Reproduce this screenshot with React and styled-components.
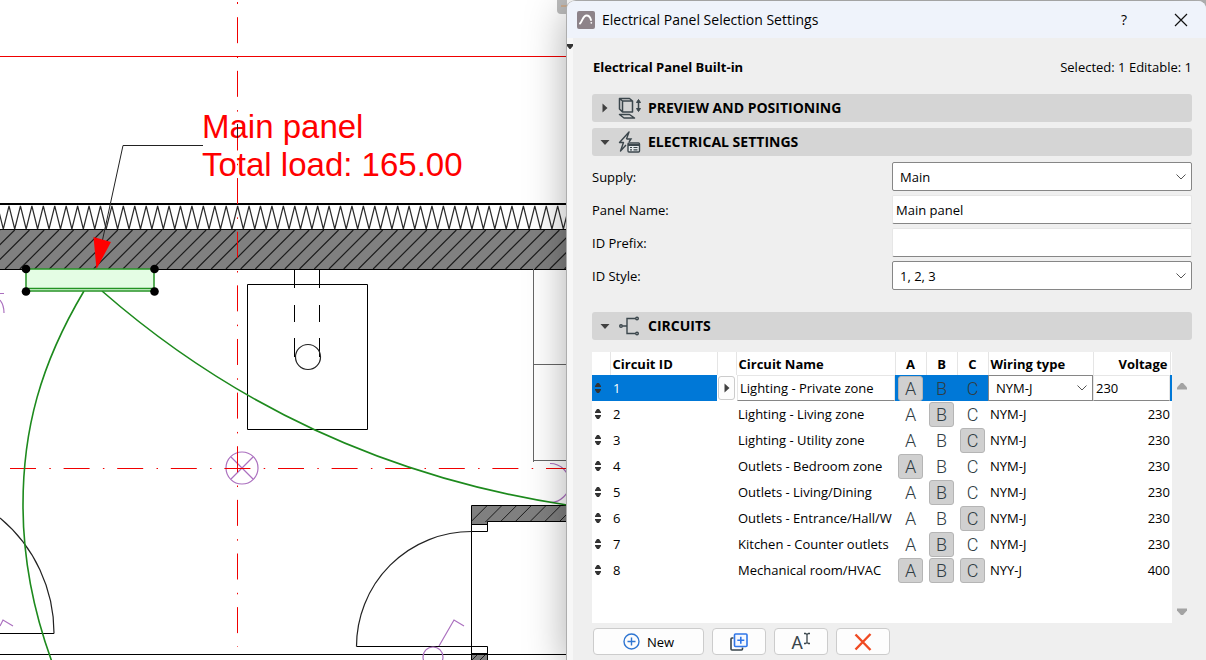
import React, { useState } from "react";
import styled, { createGlobalStyle } from "styled-components";

const GlobalStyle = createGlobalStyle`
  * {
    box-sizing: border-box;
  }

  body {
    margin: 0;
    background: #fff;
    color: #000;
    font-family: "Open Sans", "Noto Sans", sans-serif;
    font-size: 13px;
  }

  button,
  input,
  select {
    margin: 0;
    color: inherit;
    font: inherit;
  }
`;

// Page: floor plan on the left, settings dialog on the right
const Desktop = styled.div`
  display: grid;
  grid-template-columns: minmax(0, 567fr) minmax(0, 639fr);
  min-height: 100vh;
  overflow: hidden;
`;

const PlanArea = styled.main`
  display: flex;
  min-width: 0;
`;

const PlanDrawing = styled.svg`
  display: block;
  width: 100%;
  min-height: 100%;
  font-family: "Liberation Sans", Arial, sans-serif;
`;

const DialogSlot = styled.div`
  display: flex;
  padding-top: 1px;
  background: #b8b8b8;
  border-top-left-radius: 9px;
`;

const Dialog = styled.section`
  display: flex;
  flex-direction: column;
  flex: 1;
  min-width: 0;
  background: #efefef;
  border-radius: 8px 8px 0 0;
  box-shadow: -1px 0 0 #adadad, 0 8px 42px rgba(0, 0, 0, 0.34);
`;

const TitleBar = styled.header`
  display: flex;
  align-items: center;
  gap: 7px;
  height: 37px;
  padding-left: 10px;
  background: #eff3fb;
  border-radius: 8px 8px 0 0;
`;

const Title = styled.h1`
  flex: 1;
  margin: 0;
  font-size: 14px;
  font-weight: 400;
`;

const TitleButton = styled.button`
  display: grid;
  place-items: center;
  width: 50px;
  height: 37px;
  padding: 0;
  background: none;
  border: 0;
  font-size: 14px;
`;

const DialogMain = styled.div`
  display: flex;
  flex: 1;
  min-height: 0;
`;

const SideStrip = styled.div`
  width: 6px;
  padding-top: 6px;
  background: #f7f7f7;

  svg {
    display: block;
  }
`;

const DialogBody = styled.div`
  display: flex;
  flex: 1;
  flex-direction: column;
  min-width: 0;
  padding: 20px 14px 5px 19px;
`;

const Summary = styled.div`
  display: flex;
  align-items: center;
  justify-content: space-between;
  height: 18px;
  margin-bottom: 18px;
  padding-left: 1px;
`;

const PanelType = styled.h2`
  margin: 0;
  font-size: 13px;
  font-weight: 700;
`;

const SectionHeader = styled.button`
  display: flex;
  align-items: center;
  flex-shrink: 0;
  width: 100%;
  height: 28px;
  margin-bottom: ${(props) => props.$after || 6}px;
  padding: 0 0 1px 7px;
  background: #d5d5d5;
  border: 0;
  border-radius: 3px;
  font-size: 14px;
  font-weight: 700;
  line-height: 18px;
  text-align: left;

  svg {
    margin-right: 7px;
  }

  svg + svg {
    margin-right: 6px;
  }
`;

const Fields = styled.div`
  display: grid;
  gap: 4px;
  margin-bottom: 22px;
`;

const Field = styled.label`
  display: grid;
  grid-template-columns: 1fr 1fr;
  align-items: center;
`;

const TextInput = styled.input`
  width: 100%;
  height: 29px;
  padding: 0 3px;
  background: #fff;
  border: 1px solid #e6e6e6;
  border-bottom-color: #868686;
  border-radius: 2px;
  outline: 0;
`;

const SelectBox = styled.span`
  display: grid;
  grid-template-columns: minmax(0, 1fr);
  align-items: center;
  height: ${(props) => (props.$compact ? 26 : 29)}px;
  background: #fff;
  border: 1px solid #868686;
  border-radius: ${(props) => (props.$compact ? 0 : 2)}px;

  select,
  svg {
    grid-area: 1 / 1;
  }

  select {
    width: 100%;
    height: 100%;
    padding: 0 24px 0 7px;
    appearance: none;
    background: none;
    border: 0;
    outline: 0;
  }

  svg {
    justify-self: end;
    margin: 0 4px 0 0;
    pointer-events: none;
  }
`;

const CircuitArea = styled.div`
  display: flex;
  flex: 1;
  margin-bottom: 5px;
`;

const TableFrame = styled.div`
  flex: 1;
  min-width: 0;
  background: #fff;
`;

const ScrollColumn = styled.div`
  display: flex;
  flex-direction: column;
  justify-content: space-between;
  align-items: center;
  width: 20px;
  padding: 28px 0 5px;

  button {
    display: flex;
    padding: 0;
    background: none;
    border: 0;
  }
`;

const CircuitTable = styled.table`
  width: 100%;
  table-layout: fixed;
  border-collapse: collapse;
`;

const HeadCell = styled.th`
  width: ${(props) => (props.$width ? `${props.$width}px` : "auto")};
  height: 23px;
  padding: ${(props) => (props.$bare ? "0" : "0 2px")};
  border-left: ${(props) => (props.$first ? "0" : "1px solid #e5e5e5")};
  font-weight: 700;
  text-align: ${(props) => props.$align || "left"};
  white-space: nowrap;
`;

const Row = styled.tr`
  height: 26px;
  background: ${(props) => (props.$selected ? "#0078d7" : "#fff")};
`;

const Cell = styled.td`
  height: 26px;
  padding: 0 0 0 ${(props) => props.$pad || 0}px;
  overflow: hidden;
  background: ${(props) => (props.$plain ? "#fff" : "transparent")};
  color: ${(props) => (props.$light ? "#fff" : "inherit")};
  text-align: ${(props) => props.$align || "left"};
  white-space: nowrap;

  > svg {
    display: block;
  }
`;

const CellInput = styled(TextInput)`
  display: block;
  height: 26px;
  padding: 0 2px;
  border-radius: 0;
`;

const ExpandButton = styled.button`
  display: grid;
  place-items: center;
  width: 17px;
  height: 24px;
  margin: 0 auto;
  padding: 0;
  background: #fdfdfd;
  border: 1px solid #ccc;
  border-radius: 3px;
`;

const PhaseButton = styled.button`
  display: block;
  width: 25px;
  height: 25px;
  margin: 0 auto;
  padding: 0;
  background: ${(props) => (props.$on ? "#d0d0d0" : "transparent")};
  border: 1px solid ${(props) => (props.$on ? "#b5b5b5" : "transparent")};
  border-radius: 3px;
  color: #303d44;
  font-family: Roboto, sans-serif;
  font-size: 18px;
  font-weight: 300;
  line-height: 24px;
`;

const ButtonRow = styled.div`
  display: flex;
  gap: 8px;
  padding-left: 1px;
`;

const ActionButton = styled.button`
  display: flex;
  align-items: center;
  justify-content: center;
  gap: 7px;
  width: ${(props) => (props.$wide ? 111 : 54)}px;
  height: 27px;
  padding: 0;
  background: #fdfdfd;
  border: 1px solid #ccc;
  border-radius: 4px;
`;

const RenameGlyph = styled.span`
  display: flex;
  align-items: flex-start;
  padding-top: 3px;
  color: #39444a;
  font-family: Roboto, sans-serif;
  font-size: 18px;
  line-height: 22px;
`;

const CIRCUITS = [
  { id: 1, name: "Lighting - Private zone", phases: "A", wiring: "NYM-J", voltage: 230 },
  { id: 2, name: "Lighting - Living zone", phases: "B", wiring: "NYM-J", voltage: 230 },
  { id: 3, name: "Lighting - Utility zone", phases: "C", wiring: "NYM-J", voltage: 230 },
  { id: 4, name: "Outlets - Bedroom zone", phases: "A", wiring: "NYM-J", voltage: 230 },
  { id: 5, name: "Outlets - Living/Dining", phases: "B", wiring: "NYM-J", voltage: 230 },
  { id: 6, name: "Outlets - Entrance/Hall/W", phases: "C", wiring: "NYM-J", voltage: 230 },
  { id: 7, name: "Kitchen - Counter outlets", phases: "B", wiring: "NYM-J", voltage: 230 },
  { id: 8, name: "Mechanical room/HVAC", phases: "ABC", wiring: "NYY-J", voltage: 400 },
];

const PHASES = ["A", "B", "C"];

// Icons
const Chevron = () => (
  <svg width="12" height="12" viewBox="0 0 12 12" fill="none" stroke="#555">
    <path d="M1.5 3.5 6 8l4.5-4.5" />
  </svg>
);

const Triangle = ({ dir, color = "#404040" }) => {
  const shapes = {
    right: "M3.500 1.500 8.500 6 3.500 10.500Z",
    down: "M1.5 4h9L6 9Z",
    up: "M1 9.500V7.500L5 3h2l4 4.500v2Z",
    scrollDown: "M1 2.500v2L5 9h2l4-4.500v-2Z",
  };
  return (
    <svg width="12" height="12" viewBox="0 0 12 12" fill={color}>
      <path d={shapes[dir]} />
    </svg>
  );
};

const DragHandle = () => (
  <svg width="12" height="12" viewBox="0 0 12 12" fill="#333">
    <path d="M3 5V4l2-3h2l2 3v1ZM3 7h6v1l-2 3H5L3 8Z" />
  </svg>
);

const AppLogo = () => (
  <svg width="18" height="18" viewBox="0 0 18 18">
    <rect width="18" height="18" rx="2" fill="#8d8389" />
    <path d="M3 12.500C5.500 10 6 4.500 9.500 4.500c3 0 4 2.500 4.500 4.500" fill="none" stroke="#fff" strokeWidth="1.900" strokeLinecap="round" />
    <circle cx="14.300" cy="11.800" r="0.900" fill="#fff" />
  </svg>
);

const PositioningIcon = () => (
  <svg width="24" height="22" viewBox="0 0 24 22" fill="none" stroke="#3b464c" strokeWidth="1.500">
    <path d="M4.500 4h10v11h-10ZM4.500 4l-3-2.500h10l3 2.500M1.500 1.500v10.500l3 3M1.500 17.500h10l5 3.500H6Z" strokeLinejoin="round" />
    <path d="M20.500 4v9" />
    <path d="m18.500 5.500 2-3 2 3ZM18.500 11.500l2 3 2-3Z" fill="#3b464c" strokeWidth="1" />
  </svg>
);

const ElectricalIcon = () => (
  <svg width="24" height="22" viewBox="0 0 24 22" fill="none" stroke="#3b464c" strokeWidth="1.400">
    <path d="M8.500 8 11 1 1.500 11.500h4L2.500 20 8 14" strokeLinejoin="round" />
    <path d="M8.500 8h4.500l-2 3" />
    <rect x="10" y="12" width="11.500" height="9" rx="1" fill="#e4e8ea" />
    <path d="M10 14h11.500" strokeWidth="2" />
    <path d="M12 16.500h2M12 18.800h2M15.500 16.500h4M15.500 18.800h4" strokeWidth="1.200" />
  </svg>
);

const CircuitIcon = () => (
  <svg width="24" height="22" viewBox="0 0 24 22" fill="none" stroke="#3b464c" strokeWidth="1.400">
    <path d="M4.500 11h4.500M17.500 3.500H9v15H17.500" />
    <circle cx="3" cy="11" r="1.300" />
    <circle cx="19" cy="3.500" r="1.300" />
    <circle cx="19" cy="18.500" r="1.300" />
  </svg>
);

const PlusCircle = () => (
  <svg width="17" height="17" viewBox="0 0 17 17" fill="none" stroke="#2f76d2" strokeWidth="1.400">
    <circle cx="8.500" cy="8.500" r="7.500" />
    <path d="M8.500 4.500v8M4.500 8.500h8" />
  </svg>
);

const DuplicateIcon = () => (
  <svg width="18" height="18" viewBox="0 0 18 18" fill="none" strokeWidth="1.600">
    <path d="M3.500 5H2a1 1 0 0 0-1 1v10a1 1 0 0 0 1 1h9.500a1 1 0 0 0 1-1v-1.500" stroke="#39444a" />
    <rect x="4.500" y="1" width="12.500" height="12.500" rx="1" fill="#f4f8ff" stroke="#2f76e8" />
    <path d="M10.800 3.800v7M7.300 7.300h7" stroke="#2f76e8" />
  </svg>
);

const CursorIcon = () => (
  <svg width="8" height="18" viewBox="0 0 8 18" fill="none" stroke="#39444a" strokeWidth="1.300">
    <path d="M1 1.500h1.500L4 2.500l1.500-1H7M4 2.500v8M1 11.500h1.500l1.500-1 1.500 1H7" />
  </svg>
);

const DeleteIcon = () => (
  <svg width="18" height="18" viewBox="0 0 18 18" fill="none" stroke="#f04a22" strokeWidth="2.400">
    <path d="M1.500 1.500 16.500 17M16.500 1 1.500 16.500" />
  </svg>
);

// Floor plan
const insulation = Array.from({ length: 52 }, (_, i) => {
  const x = -2.4 + i * 11.43;
  return `L${x} 206 L${x + 5.7} 229`;
}).join(" ");

const wallHatch = Array.from({ length: 43 }, (_, i) => {
  const x = -39 + i * 14.72;
  return `M${x} 269 l39 -39`;
}).join(" ");

const lowerHatch = Array.from({ length: 9 }, (_, i) => `M${456 + i * 14.72} 522 l17 -17`).join(" ");

function FloorPlan() {
  return (
    <PlanDrawing viewBox="0 0 567 660" preserveAspectRatio="xMinYMin slice" role="img" aria-label="Floor plan">
      <defs>
        <clipPath id="wall">
          <rect x="0" y="230" width="567" height="39" />
        </clipPath>
        <clipPath id="lowerWall">
          <path d="M472 506h95v16h-79v2h-16Z" />
        </clipPath>
      </defs>

      <path d="M0 56.500H567" stroke="#f00000" />
      <path d="M557 0H567V14H561a4 4 0 0 1-4-4Z" fill="#bdbdbd" />
      <path d="M561 6H567" stroke="#d69a62" />

      {/* Outer wall */}
      <path d={`M-10 229 ${insulation}`} fill="none" stroke="#2c2c2c" strokeWidth="1.200" />
      <rect x="0" y="230" width="567" height="39" fill="#808080" />
      <path d={wallHatch} stroke="#1c1c1c" strokeWidth="1.200" clipPath="url(#wall)" />
      <path d="M0 204H567" stroke="#000" strokeWidth="2" />
      <path d="M0 229.500H567M0 269.500H567" stroke="#000" />

      {/* Fixtures */}
      <g fill="none" stroke="#000">
        <path d="M247.500 284.500h120v145h-120Z" />
        <path d="M294.500 269v19M294.500 305v17M294.500 338v19M319.500 269v19M319.500 305v17M319.500 338v19" />
        <circle cx="308" cy="357" r="12.500" stroke="#222" strokeWidth="1.200" />
        <path d="M533.500 269V462M533.500 364.500H567M533.500 460.500H567" stroke="#666" />
      </g>

      {/* Lower wall and doors */}
      <path d="M472 506h95v16h-79v2h-16Z" fill="#808080" />
      <path d={lowerHatch} stroke="#1c1c1c" clipPath="url(#lowerWall)" />
      <rect x="472" y="654" width="15" height="6" fill="#808080" />
      <path d="m472 660 6-6M480 660l6-6" stroke="#1c1c1c" />
      <g fill="none" stroke="#000">
        <path d="M567 505.500H471.500V660M567 521.500H487.500V531.500H471.500M471.500 524.500h16" />
        <path d="M356.500 646.500h131v14M471.500 653.500h16M0 654.500H567M0 633.500H54" />
        <path d="M471.500 531.500A115 115 0 0 0 356.500 646.500" stroke="#222" strokeWidth="1.200" />
        <path d="M0 518A150 150 0 0 1 54 633.500" stroke="#222" strokeWidth="1.200" />
      </g>

      {/* Lamps and switches */}
      <g fill="none" stroke="#ab70bf" strokeWidth="1.200">
        <circle cx="242" cy="468" r="16" />
        <path d="m231 457 22 22M253 457l-22 22" />
        <circle cx="433" cy="657" r="10" />
        <path d="m439 646 15-26 10 6M0 626l3-6 10 6M0 293.500h4M0 300q4 5 4 13" />
        <path d="M550 463.500a19.500 19.500 0 0 1 0 39" />
      </g>

      {/* Axes */}
      <path d="M10 468.500H567" stroke="#f00000" strokeDasharray="26 13.300 1.500 12.800" />
      <path d="M237.500 17.200V647" stroke="#f00000" strokeDasharray="26 13.300 1.500 12.830" />
      <path d="M237.500 2v2" stroke="#f00000" />

      {/* Circuit lines */}
      <g fill="none" stroke="#1d8a1d" strokeWidth="1.600">
        <path d="M84 291C40 365 23 430 23 505C23 560 33 610 52 662" />
        <path d="M102 291Q300 464 567 505" />
      </g>

      {/* Selected panel */}
      <rect x="26" y="269" width="128" height="22" fill="#e4fde4" stroke="#249324" strokeWidth="1.500" />
      <path d="M26 288.500H154" stroke="#249324" strokeWidth="1.500" />
      <g>
        <circle cx="26" cy="269" r="4.300" />
        <circle cx="154.500" cy="269" r="4.300" />
        <circle cx="26" cy="291.500" r="4.300" />
        <circle cx="154.500" cy="291.500" r="4.300" />
      </g>

      {/* Label with leader */}
      <path d="M203 145.500H123L102.500 240" fill="none" stroke="#222" />
      <path d="M93.500 237 111 242 96.500 269Z" fill="#f00" />
      <g fill="#f00" fontSize="33">
        <text x="202" y="138">Main panel</text>
        <text x="202" y="176">Total load: 165.00</text>
      </g>
      <path d="M237.500 124v14" stroke="#222" />
    </PlanDrawing>
  );
}

function CircuitRow({ circuit, selected, onTogglePhase }) {
  return (
    <Row $selected={selected}>
      <Cell>
        <DragHandle />
      </Cell>
      <Cell $pad={3} $light={selected}>
        {circuit.id}
      </Cell>
      <Cell $plain>
        {selected && (
          <ExpandButton type="button" aria-label="Circuit options">
            <Triangle dir="right" />
          </ExpandButton>
        )}
      </Cell>
      <Cell $plain $pad={selected ? 1 : 2}>
        {selected ? <CellInput aria-label="Circuit Name" defaultValue={circuit.name} /> : circuit.name}
      </Cell>
      {PHASES.map((phase) => (
        <Cell key={phase}>
          <PhaseButton
            type="button"
            $on={circuit.phases.includes(phase)}
            aria-pressed={circuit.phases.includes(phase)}
            onClick={() => onTogglePhase(circuit.id, phase)}
          >
            {phase}
          </PhaseButton>
        </Cell>
      ))}
      <Cell $pad={selected ? 0 : 2}>
        {selected ? (
          <SelectBox $compact>
            <select aria-label="Wiring type" defaultValue={circuit.wiring}>
              <option>NYM-J</option>
              <option>NYY-J</option>
            </select>
            <Chevron />
          </SelectBox>
        ) : (
          circuit.wiring
        )}
      </Cell>
      <Cell $align="right">
        {selected ? <CellInput aria-label="Voltage" defaultValue={circuit.voltage} /> : circuit.voltage}
      </Cell>
      <Cell />
    </Row>
  );
}

export default function App() {
  const [circuits, setCircuits] = useState(CIRCUITS);

  const togglePhase = (id, phase) => {
    setCircuits((list) =>
      list.map((c) => {
        if (c.id !== id) return c;
        const phases = c.phases.includes(phase) ? c.phases.replace(phase, "") : c.phases + phase;
        return { ...c, phases };
      })
    );
  };

  return (
    <>
      <GlobalStyle />
      <Desktop>
        <PlanArea>
          <FloorPlan />
        </PlanArea>

        <DialogSlot>
          <Dialog aria-labelledby="dialog-title">
            <TitleBar>
              <AppLogo />
              <Title id="dialog-title">Electrical Panel Selection Settings</Title>
              <TitleButton type="button" aria-label="Help">?</TitleButton>
              <TitleButton type="button" aria-label="Close">
                <svg width="14" height="14" viewBox="0 0 14 14" stroke="#111" strokeWidth="1.200">
                  <path d="m1 1 12 12M13 1 1 13" />
                </svg>
              </TitleButton>
            </TitleBar>

            <DialogMain>
              <SideStrip>
                <svg width="6" height="6" viewBox="0 0 6 6" fill="#333">
                  <path d="M0 0h6v2L3.500 5h-1L0 2Z" />
                </svg>
              </SideStrip>

              <DialogBody>
                <Summary>
                  <PanelType>Electrical Panel Built-in</PanelType>
                  <span>Selected: 1 Editable: 1</span>
                </Summary>

                <SectionHeader type="button" aria-expanded="false">
                  <Triangle dir="right" />
                  <PositioningIcon />
                  PREVIEW AND POSITIONING
                </SectionHeader>
                <SectionHeader type="button" aria-expanded="true">
                  <Triangle dir="down" />
                  <ElectricalIcon />
                  ELECTRICAL SETTINGS
                </SectionHeader>

                <Fields>
                  <Field>
                    Supply:
                    <SelectBox>
                      <select defaultValue="Main">
                        <option>Main</option>
                      </select>
                      <Chevron />
                    </SelectBox>
                  </Field>
                  <Field>
                    Panel Name:
                    <TextInput defaultValue="Main panel" />
                  </Field>
                  <Field>
                    ID Prefix:
                    <TextInput defaultValue="" />
                  </Field>
                  <Field>
                    ID Style:
                    <SelectBox>
                      <select defaultValue="1, 2, 3">
                        <option>1, 2, 3</option>
                      </select>
                      <Chevron />
                    </SelectBox>
                  </Field>
                </Fields>

                <SectionHeader type="button" aria-expanded="true" $after={12}>
                  <Triangle dir="down" />
                  <CircuitIcon />
                  CIRCUITS
                </SectionHeader>

                <CircuitArea>
                  <TableFrame>
                    <CircuitTable>
                      <thead>
                        <tr>
                          <HeadCell $first $bare $width={18} />
                          <HeadCell $width={107}>Circuit ID</HeadCell>
                          <HeadCell $bare $width={19} />
                          <HeadCell>Circuit Name</HeadCell>
                          <HeadCell $width={31} $align="center">A</HeadCell>
                          <HeadCell $width={31} $align="center">B</HeadCell>
                          <HeadCell $width={31} $align="center">C</HeadCell>
                          <HeadCell $width={105}>Wiring type</HeadCell>
                          <HeadCell $width={77} $align="right">Voltage</HeadCell>
                          <HeadCell $bare $width={2} />
                        </tr>
                      </thead>
                      <tbody>
                        {circuits.map((circuit) => (
                          <CircuitRow
                            key={circuit.id}
                            circuit={circuit}
                            selected={circuit.id === 1}
                            onTogglePhase={togglePhase}
                          />
                        ))}
                      </tbody>
                    </CircuitTable>
                  </TableFrame>
                  <ScrollColumn>
                    <button type="button" aria-label="Scroll up">
                      <Triangle dir="up" color="#a3a3a3" />
                    </button>
                    <button type="button" aria-label="Scroll down">
                      <Triangle dir="scrollDown" color="#a3a3a3" />
                    </button>
                  </ScrollColumn>
                </CircuitArea>

                <ButtonRow>
                  <ActionButton type="button" $wide>
                    <PlusCircle />
                    New
                  </ActionButton>
                  <ActionButton type="button" aria-label="Duplicate">
                    <DuplicateIcon />
                  </ActionButton>
                  <ActionButton type="button" aria-label="Rename">
                    <RenameGlyph>
                      A
                      <CursorIcon />
                    </RenameGlyph>
                  </ActionButton>
                  <ActionButton type="button" aria-label="Delete">
                    <DeleteIcon />
                  </ActionButton>
                </ButtonRow>
              </DialogBody>
            </DialogMain>
          </Dialog>
        </DialogSlot>
      </Desktop>
    </>
  );
}
